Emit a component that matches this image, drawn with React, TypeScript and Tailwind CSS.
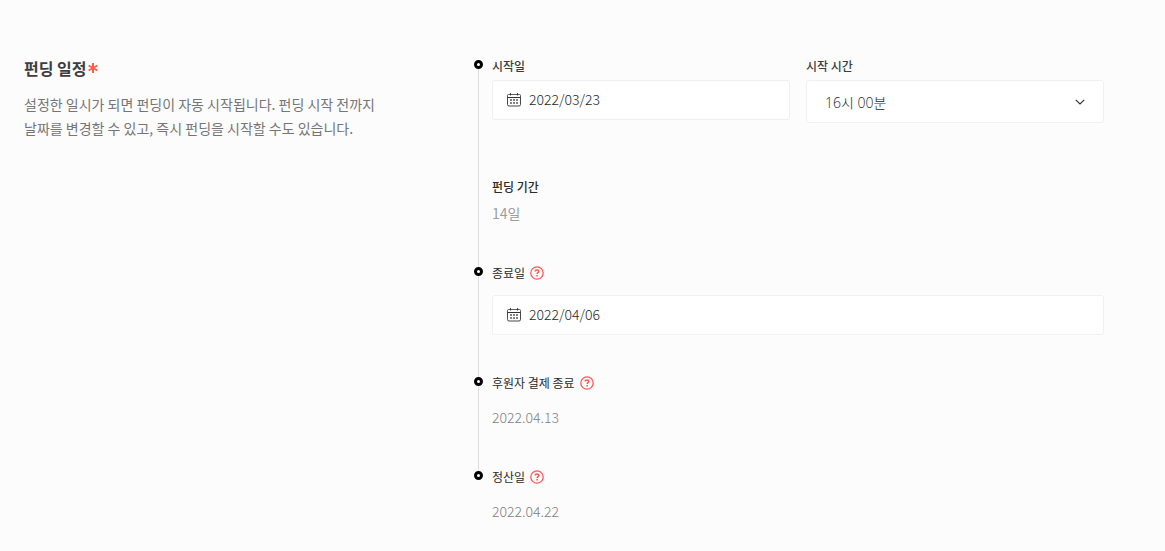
import React, { useState } from "react";

const labelText = "block text-[12px] leading-3";
const fieldBox = "w-full rounded-[3px] border border-[#f0f0f0] bg-white text-[#1f1f1f] outline-none";

function CalendarIcon() {
  return (
    <svg viewBox="0 0 14 14" className="size-3.5" fill="none" stroke="#333" aria-hidden="true">
      <path d="M.5 4.5v-2a1 1 0 0 1 1-1h11a1 1 0 0 1 1 1v2" strokeWidth=".8" />
      <path d="M.5 4v7.5a1.5 1.5 0 0 0 1.5 1.5h10a1.5 1.5 0 0 0 1.5-1.5V4" strokeWidth=".9" />
      <path d="M1 4.5h12" />
      <path d="M3.5 0v2.5M10.5 0v2.5" strokeWidth=".9" />
      <path
        d="M6.2 7h1.6M9.2 7h1.6M3.2 7h1.6M3.2 10h1.6M6.2 10h1.6M9.2 10h1.6"
        strokeWidth="1.5"
      />
    </svg>
  );
}

function HelpButton({ label }: { label: string }) {
  return (
    <button type="button" aria-label={label} className="-my-1 shrink-0 cursor-pointer">
      <svg viewBox="0 0 14 14" className="size-3.5" fill="none" stroke="#ff5757">
        <circle cx="7" cy="7" r="6.2" strokeWidth="1.3" />
        <path d="M5.2 5.6c0-1.1.7-1.7 1.8-1.7s1.8.6 1.8 1.6c0 1.2-1.7 1.2-1.7 2.5" strokeWidth="1.5" />
        <path d="M7.1 9v1.5" strokeWidth="1.5" />
      </svg>
    </button>
  );
}

function DateField({ id, initial }: { id: string; initial: string }) {
  const [value, setValue] = useState(initial);
  return (
    <div className="relative">
      <span className="pointer-events-none absolute inset-y-0 left-[15px] flex items-center">
        <CalendarIcon />
      </span>
      <input
        id={id}
        type="text"
        value={value}
        onChange={(e) => setValue(e.target.value)}
        className={`${fieldBox} h-10 pr-4 pb-0.5 pl-9 font-['Noto_Sans_CJK_KR',sans-serif] text-[14px] font-light`}
      />
    </div>
  );
}

function Step({ last = false, className = "", children }: { last?: boolean; className?: string; children: React.ReactNode }) {
  return (
    <li className={`relative border-l pl-[13px] ${last ? "border-transparent" : "border-[#dedede]"} ${className}`}>
      <span className="absolute top-0 -left-[5px] size-[9px] rounded-full border-3 border-black bg-white" />
      {children}
    </li>
  );
}

const valueText = "text-[14px] leading-5 font-light text-[#808080]";

export default function App() {
  const [time, setTime] = useState("16");
  return (
    <main className="flex min-h-screen bg-[#fcfcfc] pt-14 pr-[61px] pb-7 pl-6 font-['Noto_Sans_CJK_KR',sans-serif]">
      <header className="w-[454px] shrink-0">
        <h2 className="flex items-center text-[16px] leading-6 font-bold text-[#3d3d3d]">
          펀딩 일정
          <svg viewBox="0 0 10 10" className="ml-px size-2.5" stroke="#ff5f4a" strokeWidth="2" aria-hidden="true">
            <path d="M5 0v10M.6 2.5l8.8 5M.6 7.5l8.8-5" />
          </svg>
        </h2>
        <p className="mt-3 w-[360px] text-[14px] leading-6 text-[#757575]">
          설정한 일시가 되면 펀딩이 자동 시작됩니다. 펀딩 시작 전까지 날짜를 변경할 수 있고, 즉시 펀딩을 시작할 수도 있습니다.
        </p>
      </header>

      <ol className="mt-1 min-w-0 flex-1">
        <Step className="pb-11">
          <div className="grid grid-cols-2 items-start gap-4">
            <div>
              <label htmlFor="start-date" className={`${labelText} mb-2 font-medium text-[#3d3d3d]`}>
                시작일
              </label>
              <DateField id="start-date" initial="2022/03/23" />
            </div>
            <div>
              <label htmlFor="start-time" className={`${labelText} mb-2 font-medium text-[#3d3d3d]`}>
                시작 시간
              </label>
              <div className="relative">
                <select
                  id="start-time"
                  value={time}
                  onChange={(e) => setTime(e.target.value)}
                  className={`${fieldBox} h-[43px] appearance-none px-[18px] pt-0.5 font-['Open_Sans','Noto_Sans_CJK_KR',sans-serif] text-[14px] font-light`}
                >
                  <option value="15">15시 00분</option>
                  <option value="16">16시 00분</option>
                  <option value="17">17시 00분</option>
                </select>
                <span className="pointer-events-none absolute inset-y-0 right-[19px] flex items-center">
                  <svg viewBox="0 0 10 6" className="h-1.5 w-2.5" fill="none" stroke="#2b2b2b" strokeWidth="1.1" aria-hidden="true">
                    <path d="M.7.9 5 4.9 9.3.9" />
                  </svg>
                </span>
              </div>
            </div>
          </div>
          <h3 className={`${labelText} mt-[58px] font-medium text-[#2b2b2b]`}>펀딩 기간</h3>
          <p className="mt-2.5 text-[14px] leading-5 text-[#9e9e9e]">14일</p>
        </Step>

        <Step className="pb-[42px]">
          <div className="mb-4 flex items-center gap-[5px]">
            <label htmlFor="end-date" className={`${labelText} text-[#2b2b2b]`}>
              종료일
            </label>
            <HelpButton label="종료일 도움말" />
          </div>
          <DateField id="end-date" initial="2022/04/06" />
        </Step>

        <Step className="pb-11">
          <div className="mb-[18px] flex items-center gap-[5px]">
            <h3 className={`${labelText} text-[#2b2b2b]`}>후원자 결제 종료</h3>
            <HelpButton label="후원자 결제 종료 도움말" />
          </div>
          <p className={valueText}>2022.04.13</p>
        </Step>

        <Step last>
          <div className="mb-[18px] flex items-center gap-[5px]">
            <h3 className={`${labelText} text-[#2b2b2b]`}>정산일</h3>
            <HelpButton label="정산일 도움말" />
          </div>
          <p className={valueText}>2022.04.22</p>
        </Step>
      </ol>
    </main>
  );
}
